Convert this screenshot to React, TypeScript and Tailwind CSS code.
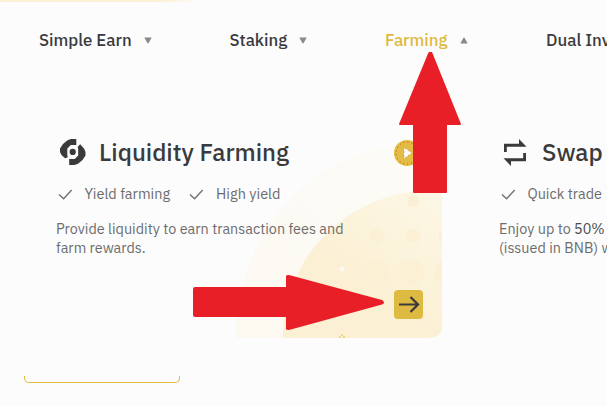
import React from "react";

const FONT = "font-['IBM_Plex_Sans',Roboto,'Liberation_Sans',sans-serif]";

function Caret({ up = false }: { up?: boolean }) {
  return (
    <svg width="8" height="7" viewBox="0 0 8 7" className={up ? "rotate-180" : ""}>
      <path d="M.3 .5h7.400L4.500 6.200h-1z" fill="#8a8a8a" />
    </svg>
  );
}

function NavItem({ label, box, text = "", up }: { label: string; box: string; text?: string; up?: boolean }) {
  return (
    <div className={`flex shrink-0 items-center gap-[12px] ${box}`}>
      <span className={`whitespace-nowrap text-[16.8px] leading-6 font-medium ${text}`}>{label}</span>
      <Caret up={up} />
    </div>
  );
}

function Check() {
  return (
    <svg width="15" height="11" viewBox="0 0 15 11" className="shrink-0">
      <path d="M1 5.500l4.600 4.200L13.700 1" fill="none" stroke="#707070" strokeWidth="1.400" />
    </svg>
  );
}

function Tag({ label }: { label: string }) {
  return (
    <div className="flex shrink-0 items-center gap-3">
      <Check />
      <span className="whitespace-nowrap">{label}</span>
    </div>
  );
}

function FarmIcon() {
  return (
    <svg width="26" height="26" viewBox="0 0 26 26" fill="#3a3a3c" className="shrink-0">
      <path d="M16.300 0v6h-5.500L7.300 9.500v6.500L7.800 18.200 5 19.200 1.500 16 0 13V9.500L3 5 7.500 1.200 11 0z" />
      <path d="M9.200 26v-6h5.500L18.200 16.500V10L17.700 7.800 20.200 5.200 24 9.500 25.500 13v3.500L22.500 21l-4.500 3.800L14.500 26z" />
      <circle cx="12.700" cy="12.900" r="3.100" />
    </svg>
  );
}

function SwapIcon() {
  return (
    <svg width="25" height="27" viewBox="0 0 25 27" fill="#3a3a3c" className="shrink-0">
      <path d="M1 13V4.800h15V0L23.500 7.800H3.800V13z" />
      <path d="M23 14v8.200H8V27L.5 19.200h19.700V14z" />
    </svg>
  );
}

function CardArt() {
  return (
    <svg width="210" height="208" viewBox="0 0 210 208" className="absolute left-[235px] top-[132px]">
      <defs>
        <linearGradient id="outer" x1="0" y1="1" x2="1" y2="0">
          <stop offset="0" stopColor="#fcf9f1" />
          <stop offset="1" stopColor="#fcfbf7" />
        </linearGradient>
        <linearGradient id="inner" x1=".5" y1=".65" x2="1" y2="0">
          <stop offset="0" stopColor="#fbf0d4" />
          <stop offset="1" stopColor="#fcf7e6" />
        </linearGradient>
      </defs>
      <path d="M1 206C1 95 85 13 178 13V206z" fill="url(#outer)" />
      <path d="M48 206C48 125 112 57 207 57V194Q207 206 193 206z" fill="url(#inner)" />
      <g fill="#fbf0d4">
        <circle cx="178" cy="69" r="6" />
        <circle cx="142" cy="104" r="7" />
        <circle cx="178" cy="104" r="7" />
        <path d="M207 98a7 7 0 0 0 0 12z" />
        <circle cx="142" cy="140" r="11" />
        <circle cx="177" cy="140" r="12" />
        <path d="M207 128a14 14 0 0 0 0 25z" />
      </g>
      <circle cx="107" cy="137" r="2.500" fill="#fcfaf3" />
      <path d="M107 202v2M105 204v2M109 204v2" stroke="#e2bd43" />
    </svg>
  );
}

export default function App() {
  return (
    <div className={`relative h-[406px] w-[607px] overflow-hidden bg-[#fcfcfc] text-[#3a3a3c] ${FONT}`}>
      <div className="absolute left-0 top-0 h-0.5 w-[200px] bg-linear-to-r from-[#fbf0d4] from-80% to-[#fcfcfc]" />
      <CardArt />

      <nav className="relative flex h-[80px] items-center pl-[39px]">
        <NavItem label="Simple Earn" box="w-[190.500px]" />
        <NavItem label="Staking" box="w-[155.500px]" />
        <NavItem label="Farming" box="w-[161px]" text="text-[#dfb941]" up />
        <NavItem label="Dual Inv" box="" />
      </nav>

      <main className="relative flex pl-[56px] pt-[56px]">
        <section className="w-[443px] shrink-0">
          <div className="flex h-8 items-center gap-[13px] pl-[4px]">
            <FarmIcon />
            <h2 className="whitespace-nowrap text-[24px] font-medium">Liquidity Farming</h2>
          </div>
          <div className="mt-[16px] flex h-5 items-center gap-[19px] pl-[1.500px] text-[14.500px] text-[#6c6c6c]">
            <Tag label="Yield farming" />
            <Tag label="High yield" />
          </div>
          <p className="mt-[15px] whitespace-nowrap text-[14.400px] leading-[19px] text-[#6c6c6c]">
            Provide liquidity to earn transaction fees and<br />farm rewards.
          </p>
        </section>
        <section className="shrink-0">
          <div className="flex h-8 items-center gap-[14px] pl-[4px]">
            <SwapIcon />
            <h2 className="whitespace-nowrap text-[24px] font-medium">Swap</h2>
          </div>
          <div className="mt-[16px] flex h-5 items-center pl-[1.500px] text-[14.400px] text-[#6c6c6c]">
            <Tag label="Quick trade" />
          </div>
          <p className="mt-[15px] whitespace-nowrap text-[14.400px] leading-[19px] text-[#6c6c6c]">
            Enjoy up to <span className="text-[#4a4a4a]">50%</span> r<br />(issued in BNB) w
          </p>
        </section>
      </main>

      <svg width="26" height="26" viewBox="0 0 26 26" className="absolute left-[394px] top-[140px]">
        <circle cx="13" cy="13" r="13" fill="#e2bd43" />
        <circle cx="13" cy="13" r="11" fill="none" stroke="#e52a25" strokeDasharray="1 3" />
        <path d="M10 7.500v11l8-5.500z" fill="#fcfaf3" stroke="#e52a25" strokeWidth=".5" strokeDasharray="1 3" />
      </svg>
      <button className="absolute left-[394px] top-[290px] flex h-[29px] w-[29px] items-center justify-center rounded-[4px] bg-[#dfba43]">
        <svg width="22" height="17" viewBox="0 0 22 17" fill="none" stroke="#3a3a3c" strokeWidth="2.200">
          <path d="M1 8.500h19M12.500 1l7.500 7.500-7.500 7.500" />
        </svg>
      </button>
      <div className="absolute left-[24px] top-[376px] h-[7px] w-[156px] rounded-b-[5px] border border-t-0 border-[#dfb941]" />
      <svg width="607" height="406" viewBox="0 0 607 406" className="pointer-events-none absolute left-0 top-0" fill="#e91f27">
        <path d="M429 52h3L461 124Q461 125 460 125H447V192Q447 193 446 193H414Q413 193 413 192V125H400Q399 125 399 124L427 56Q428 53 429 52z" />
        <path d="M195 287H286V276Q286 275 289 275L382 300Q384 301 384 302.500T382 304.500L289 330Q286 330 286 329V317H195Q193 317 193 315V289Q193 287 195 287z" />
      </svg>
    </div>
  );
}
